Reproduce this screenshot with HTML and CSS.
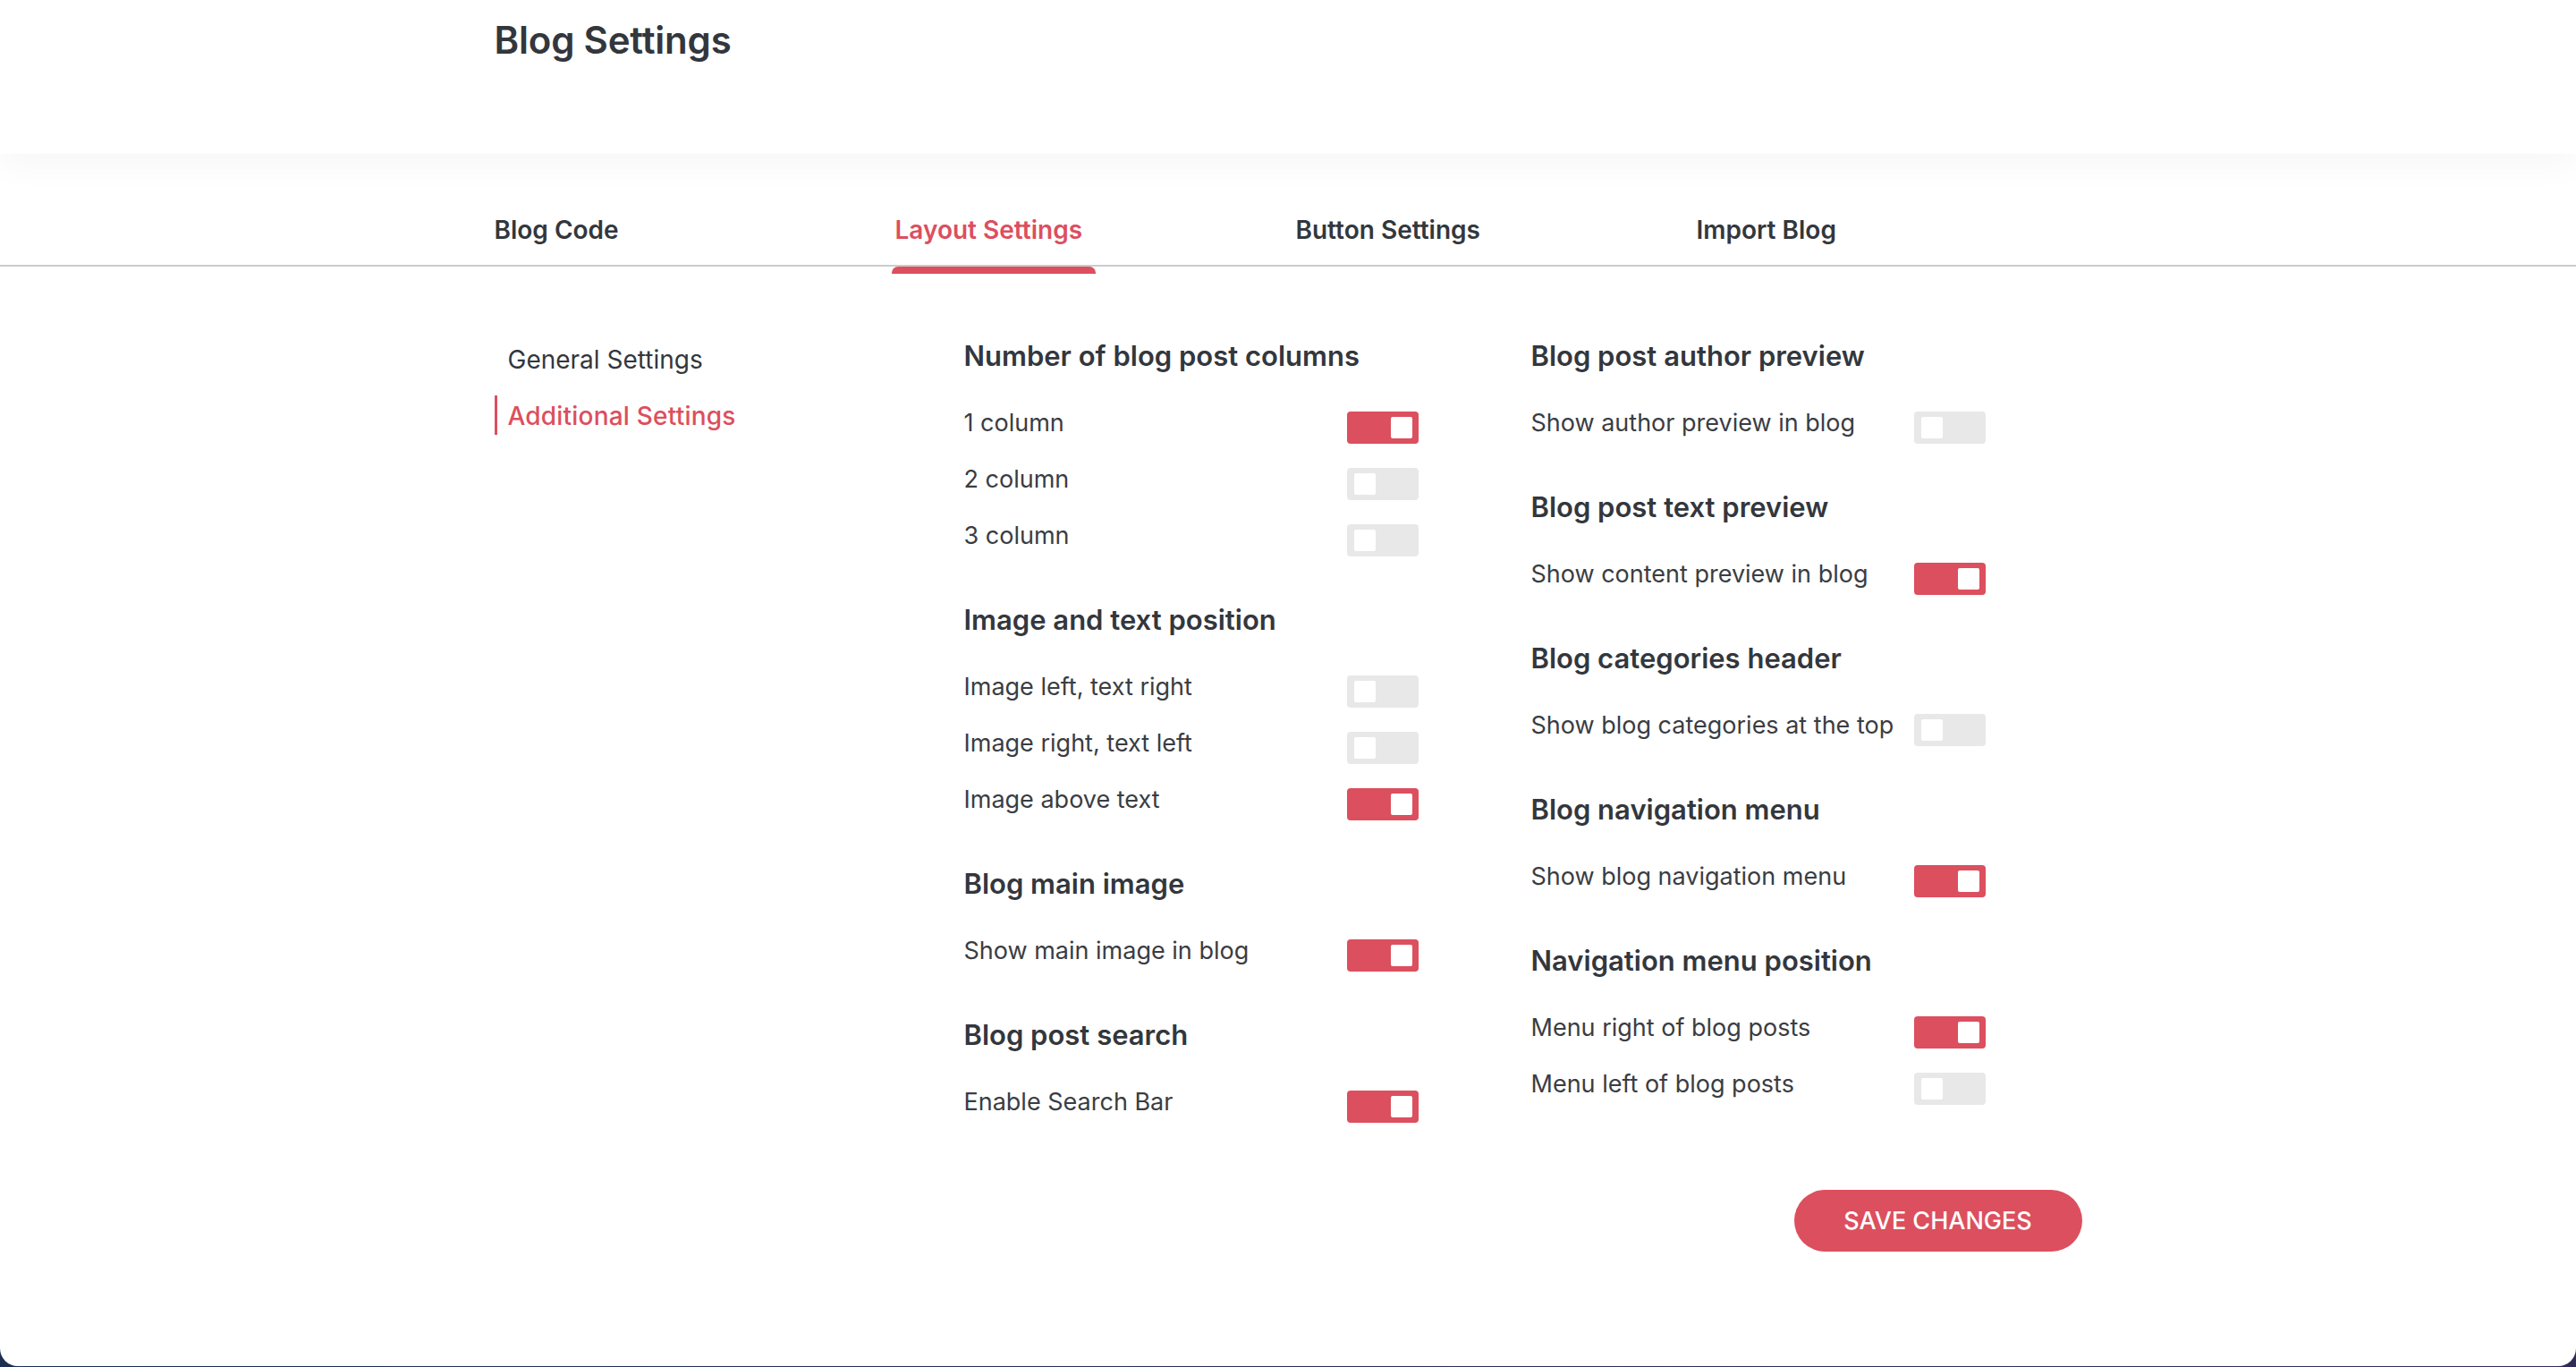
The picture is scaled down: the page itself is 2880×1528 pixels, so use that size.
FILE: index.html
```html
<!DOCTYPE html>
<html lang="en">
<head>
  <meta charset="UTF-8" />
  <meta name="viewport" content="width=device-width, initial-scale=1.0"/>
  <title>Blog Settings</title>
  <link rel="stylesheet" href="styles.css">
</head>
<body>
  <div class="page">
    <header class="top">
      <div class="wrap">
        <h1 class="title">Blog Settings</h1>
      </div>
    </header>

    <!-- Tabs -->
    <nav class="tabs">
      <div class="wrap tabs-inner">
        <a class="tab" href="#">Blog Code</a>
        <a class="tab active" href="#">Layout Settings</a>
        <a class="tab" href="#">Button Settings</a>
        <a class="tab" href="#">Import Blog</a>
      </div>
    </nav>

    <main class="wrap content">
      <div class="grid">
        <aside class="side">
          <a class="side-link" href="#">General Settings</a>
          <a class="side-link active" href="#">Additional Settings</a>
        </aside>

        <div class="col">
          <section class="group">
            <h3>Number of blog post columns</h3>
            <div class="row"><span class="label">1 column</span><span class="toggle on"></span></div>
            <div class="row"><span class="label">2 column</span><span class="toggle"></span></div>
            <div class="row"><span class="label">3 column</span><span class="toggle"></span></div>
          </section>
          <section class="group">
            <h3>Image and text position</h3>
            <div class="row"><span class="label">Image left, text right</span><span class="toggle"></span></div>
            <div class="row"><span class="label">Image right, text left</span><span class="toggle"></span></div>
            <div class="row"><span class="label">Image above text</span><span class="toggle on"></span></div>
          </section>
          <section class="group">
            <h3>Blog main image</h3>
            <div class="row"><span class="label">Show main image in blog</span><span class="toggle on"></span></div>
          </section>
          <section class="group">
            <h3>Blog post search</h3>
            <div class="row"><span class="label">Enable Search Bar</span><span class="toggle on"></span></div>
          </section>
        </div>

        <div class="col">
          <section class="group">
            <h3>Blog post author preview</h3>
            <div class="row"><span class="label">Show author preview in blog</span><span class="toggle"></span></div>
          </section>
          <section class="group">
            <h3>Blog post text preview</h3>
            <div class="row"><span class="label">Show content preview in blog</span><span class="toggle on"></span></div>
          </section>
          <section class="group">
            <h3>Blog categories header</h3>
            <div class="row"><span class="label">Show blog categories at the top</span><span class="toggle"></span></div>
          </section>
          <section class="group">
            <h3>Blog navigation menu</h3>
            <div class="row"><span class="label">Show blog navigation menu</span><span class="toggle on"></span></div>
          </section>
          <section class="group">
            <h3>Navigation menu position</h3>
            <div class="row"><span class="label">Menu right of blog posts</span><span class="toggle on"></span></div>
            <div class="row"><span class="label">Menu left of blog posts</span><span class="toggle"></span></div>
          </section>
        </div>
      </div>

      <div class="actions">
        <button class="save">SAVE CHANGES</button>
      </div>
    </main>
  </div>
</body>
</html>
```

FILE: styles.css
```css
body {
  margin: 0;
  font-family: "Inter", "Noto Sans", sans-serif;
  color: #33373d;
  background: linear-gradient(90deg, #1b3050, #2f2c56);
}
a { text-decoration: none; color: inherit; }

.page {
  background: #fff;
  min-height: 1527px;
  border-radius: 0 0 20px 20px;
  overflow: hidden;
}
.wrap { width: 1775px; margin: 0 auto; }

/* Header */
.top {
  height: 172px;
  background: #fff;
  position: relative;
  z-index: 1;
  box-shadow: 0 14px 34px rgba(0, 0, 0, 0.035);
}
.title {
  margin: 0;
  padding-top: 21px;
  font-size: 42px;
  line-height: 48px;
  font-weight: 600;
  letter-spacing: -0.2px;
}

/* Tabs */
.tabs { border-bottom: 2px solid #cccccc; }
.tabs-inner { display: flex; padding: 68px 0 22px; }
.tab {
  width: 448px;
  flex: none;
  font-size: 28px;
  line-height: 34px;
  font-weight: 600;
  color: #33373d;
}
.tab.active { color: #dc4f5e; position: relative; }
.tab.active::after {
  content: "";
  position: absolute;
  left: -4px;
  top: calc(100% + 24px);
  width: 228px;
  height: 8px;
  background: #dc4f5e;
  border-radius: 7px 7px 0 0;
}

/* Content */
.content { padding-top: 79px; }
.grid {
  display: grid;
  grid-template-columns: 399px 508px 508px;
  column-gap: 126px;
  align-items: start;
}

.side { padding-top: 2px; }
.side-link {
  display: block;
  height: 44px;
  line-height: 46px;
  padding-left: 15px;
  margin-bottom: 19px;
  font-size: 28px;
  color: #33373d;
}
.side-link.active {
  color: #dc4f5e;
  font-weight: 500;
  letter-spacing: 0.2px;
  border-left: 3px solid #dc4f5e;
  padding-left: 12px;
}

.group { margin-bottom: 50px; }
.group:last-child { margin-bottom: 0; }
.group h3 {
  margin: 0 0 44px;
  padding-top: 3px;
  font-size: 31px;
  line-height: 36px;
  font-weight: 600;
}
.row {
  display: flex;
  justify-content: space-between;
  align-items: flex-start;
  height: 36px;
  margin-bottom: 27px;
}
.row:last-child { margin-bottom: 0; }
.label {
  font-size: 27px;
  line-height: 25px;
  color: #3a3d43;
}

/* Toggle */
.toggle {
  position: relative;
  width: 80px;
  height: 36px;
  border-radius: 4px;
  background: #e8e8e8;
  flex: none;
}
.toggle::after {
  content: "";
  position: absolute;
  top: 6px;
  left: 8px;
  width: 24px;
  height: 24px;
  border-radius: 2px;
  background: #fff;
}
.toggle.on { background: #dc4f5e; }
.toggle.on::after { left: auto; right: 7px; }

.actions {
  display: flex;
  justify-content: flex-end;
  margin-top: 75px;
}
.save {
  width: 322px;
  height: 69px;
  border: none;
  border-radius: 35px;
  background: #dc4f5e;
  color: #fff;
  font-family: inherit;
  font-size: 27px;
  font-weight: 500;
  cursor: pointer;
}
```
